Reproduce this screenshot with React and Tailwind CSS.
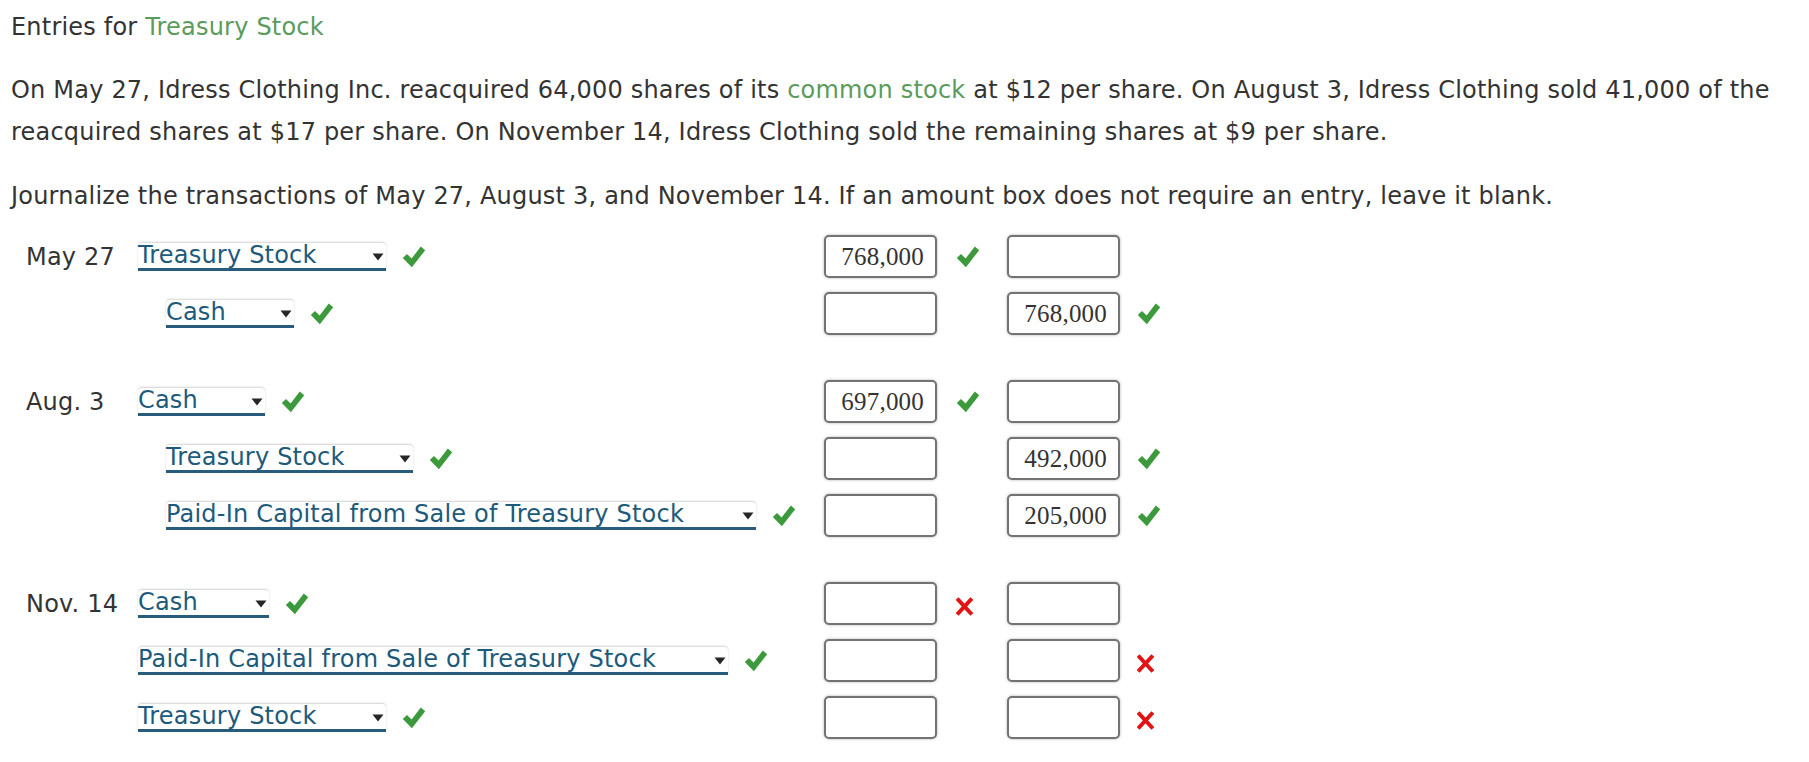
import React from 'react'

const font = { fontFamily: '"DejaVu Sans", Verdana, sans-serif' }

function Check() {
  return (
    <svg width="24" height="24" viewBox="0 0 24 24" className="shrink-0">
      <path d="M0.8 13 L5 9 L9.6 13.6 L18.8 1.6 L23.2 5.2 L9.9 22.2 Z" fill="#3c9a3c" />
    </svg>
  )
}

function Cross() {
  return (
    <svg width="17" height="19" viewBox="0 0 17 19" className="shrink-0 mt-[5px]">
      <path d="M2.5 3 L14.5 16 M14.5 3 L2.5 16" stroke="#e11414" strokeWidth="4" strokeLinecap="square" />
    </svg>
  )
}

// fake dropdown, styled like the graded account picker
function AccountSelect({ label, width }) {
  return (
    <div
      className="flex items-center justify-between h-[28px] bg-white border-b-[3px] border-[#285c7c] rounded-t-[4px] shadow-[0_-1px_2px_rgba(0,0,0,0.18)] text-[24px] leading-[25px] text-[#1d5a7b]"
      style={{ width }}
    >
      <span className="whitespace-nowrap">{label}</span>
      <svg width="12" height="8" viewBox="0 0 12 8" className="mr-[2px] mt-[3px]">
        <path d="M0.5 0.5 L11.5 0.5 L6 7.5 Z" fill="#262626" />
      </svg>
    </div>
  )
}

function AmountBox({ value }) {
  return (
    <div
      className="w-[113px] h-[43px] shrink-0 bg-white border-2 border-[#737373] rounded-[5px] shadow-[0_0_3px_rgba(0,0,0,0.3)] flex items-center justify-end pr-[11px] text-[25px] text-[#333]"
      style={{ fontFamily: '"Liberation Serif", "Times New Roman", serif' }}
    >
      {value}
    </div>
  )
}

function Mark({ type }) {
  if (type === 'ok') return <Check />
  if (type === 'bad') return <Cross />
  return null
}

function Row({ date, account, width, credit, accMark, debit, debitMark, creditAmt, creditMark }) {
  return (
    <div className="flex items-center h-[57px]">
      <div className="w-[127px] shrink-0 pl-[15px] text-[24px] text-[#333]">{date}</div>
      <div className="w-[686px] shrink-0 flex items-center">
        <div className={credit ? 'ml-[28px]' : ''}>
          <AccountSelect label={account} width={width} />
        </div>
        <div className="ml-[16px] flex items-center">
          <Mark type={accMark} />
        </div>
      </div>
      <AmountBox value={debit} />
      <div className="w-[70px] shrink-0 pl-[19px] flex items-center">
        <Mark type={debitMark} />
      </div>
      <AmountBox value={creditAmt} />
      <div className="pl-[17px] flex items-center">
        <Mark type={creditMark} />
      </div>
    </div>
  )
}

const sections = [
  [
    { date: 'May 27', account: 'Treasury Stock', width: 248, accMark: 'ok', debit: '768,000', debitMark: 'ok' },
    { account: 'Cash', width: 128, credit: true, accMark: 'ok', creditAmt: '768,000', creditMark: 'ok' },
  ],
  [
    { date: 'Aug. 3', account: 'Cash', width: 127, accMark: 'ok', debit: '697,000', debitMark: 'ok' },
    { account: 'Treasury Stock', width: 247, credit: true, accMark: 'ok', creditAmt: '492,000', creditMark: 'ok' },
    { account: 'Paid-In Capital from Sale of Treasury Stock', width: 590, credit: true, accMark: 'ok', creditAmt: '205,000', creditMark: 'ok' },
  ],
  [
    { date: 'Nov. 14', account: 'Cash', width: 131, accMark: 'ok', debitMark: 'bad' },
    { account: 'Paid-In Capital from Sale of Treasury Stock', width: 590, accMark: 'ok', creditMark: 'bad' },
    { account: 'Treasury Stock', width: 248, accMark: 'ok', creditMark: 'bad' },
  ],
]

export default function App() {
  return (
    <div className="w-[1809px] h-[762px] bg-white pl-[11px] pt-[6px] text-[#333] tracking-[0.2px] overflow-hidden" style={font}>
      <p className="text-[24px] leading-[43px]">
        Entries for <span className="text-[#5b9b5b]">Treasury Stock</span>
      </p>
      <p className="mt-[20px] text-[24px] leading-[42px] whitespace-nowrap">
        On May 27, Idress Clothing Inc. reacquired 64,000 shares of its{' '}
        <span className="text-[#5b9b5b]">common stock</span> at $12 per share. On August 3, Idress Clothing sold 41,000 of the
        <br />
        reacquired shares at $17 per share. On November 14, Idress Clothing sold the remaining shares at $9 per share.
      </p>
      <p className="mt-[22px] text-[24px] leading-[43px] whitespace-nowrap">
        Journalize the transactions of May 27, August 3, and November 14. If an amount box does not require an entry, leave it blank.
      </p>
      <div className="mt-[10px]">
        {sections.map((rows, i) => (
          <div key={i} className={i > 0 ? 'mt-[31px]' : ''}>
            {rows.map((r, j) => (
              <Row key={j} {...r} />
            ))}
          </div>
        ))}
      </div>
    </div>
  )
}
